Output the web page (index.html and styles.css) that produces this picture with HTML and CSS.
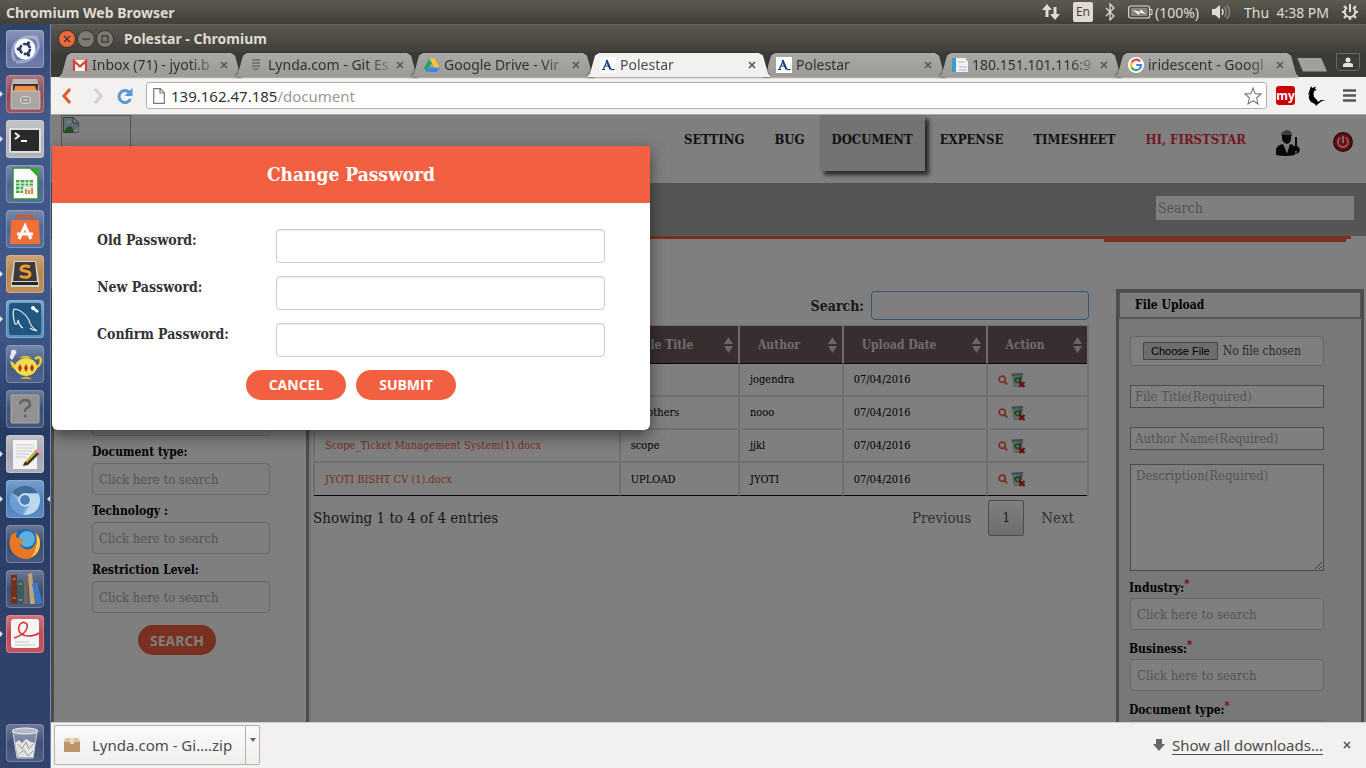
FILE: index.html
```html
<!DOCTYPE html>
<html lang="en">
<head>
<meta charset="utf-8">
<title>Polestar</title>
<link rel="stylesheet" href="styles.css">
</head>
<body>
<svg width="0" height="0" class="defs" aria-hidden="true">
  <defs>
    <linearGradient id="tile" x1="0" y1="0" x2="0" y2="1"><stop offset="0" stop-color="#fff" stop-opacity=".3"/><stop offset=".5" stop-color="#fff" stop-opacity=".08"/><stop offset="1" stop-color="#fff" stop-opacity=".14"/></linearGradient>
    <symbol id="frame" viewBox="0 0 38 38"><rect x=".5" y=".5" width="37" height="37" rx="3" fill="url(#tile)" stroke="#fff" stroke-opacity=".3"/></symbol>
    <symbol id="x" viewBox="0 0 10 10"><path d="M2 2l6 6M8 2L2 8" stroke="#555" stroke-width="1.6" fill="none"/></symbol>
    <symbol id="star-logo" viewBox="0 0 16 16"><rect width="16" height="16" fill="#fff"/><path d="M2 12.500h3M3.500 12L7 4M5 9h4M11 12q2 1.500 3.500 0" stroke="#1d3f87" stroke-width="1.200" fill="none"/><path d="M6.500 3l4 9.500" stroke="#1d3f87" stroke-width="2"/></symbol>
    <symbol id="lens" viewBox="0 0 10 10"><circle cx="4.200" cy="4.200" r="3.100" fill="none" stroke="#f26041" stroke-width="1.700"/><path d="M6.500 6.500l2.800 2.800" stroke="#f26041" stroke-width="1.900"/></symbol>
    <symbol id="bin" viewBox="0 0 16 16"><path d="M2.500 3L4 14.500h7L12.500 3z" fill="#c9d4d4" stroke="#9aa" stroke-width=".6"/><path d="M1.500 1.500L13 1v2l-11 1z" fill="#8797a2"/><path d="M9.500 4v10h1.500l1-10z" fill="#708090"/><path d="M5 8.500a2.400 2.400 0 1 1 3 2.400" fill="none" stroke="#259a1b" stroke-width="1.800"/><path d="M5 8l2 3" stroke="#259a1b" stroke-width="1.500"/><path d="M9.500 10l5 5M14.500 10l-5 5" stroke="#d8101c" stroke-width="2.200"/></symbol>
    <symbol id="sort" viewBox="0 0 9 16"><path d="M4.500 0L9 7H0zM4.500 16L9 9H0z" fill="#ccc"/></symbol>
  </defs>
</svg>

<header class="panel">
  <span class="panel-title">Chromium Web Browser</span>
  <svg width="18" height="18" viewBox="0 0 18 18"><path d="M5 14V4M13 4v9" stroke="#dfdbd2" stroke-width="3"/><path d="M0 7l5-6 5 6zM8 11l5 6 5-6z" fill="#dfdbd2"/></svg>
  <span class="lang">En</span>
  <svg class="bt" width="10" height="18" viewBox="0 0 10 18"><path d="M1 5l8 8-4 4V1l4 4-8 8" fill="none" stroke="#dfdbd2" stroke-width="1.300"/></svg>
  <svg class="bat" width="25" height="14" viewBox="0 0 25 14"><rect x=".7" y="1" width="21" height="12" rx="2" fill="none" stroke="#dfdbd2" stroke-width="1.200"/><rect x="3" y="3" width="16.500" height="8" fill="#89867e"/><path d="M22 4.500h2v5h-2" fill="none" stroke="#dfdbd2"/><path d="M5 5l7 2 .5-2.500L18 9l-6.500-1.500L11 10z" fill="#fff"/></svg>
  <span class="pct">(100%)</span>
  <svg class="vol" width="20" height="16" viewBox="0 0 20 16"><path d="M1 5h3l5-4v14l-5-4H1z" fill="#dfdbd2"/><path d="M11 5q2 3 0 6" stroke="#dfdbd2" stroke-width="1.500" fill="none"/><path d="M13.500 3q3.500 5 0 10M16 1q5 7 0 14" stroke="#89867e" stroke-width="1.500" fill="none"/></svg>
  <span class="clock">Thu&nbsp; 4:38 PM</span>
  <svg width="18" height="18" viewBox="0 0 18 18"><g fill="none" stroke="#dfdbd2"><path d="M6 4.500a5.300 5.300 0 1 0 6 0" stroke-width="2"/><path d="M9 1v8" stroke-width="2"/><path d="M3 3l2 2M15 3l-2 2M1 9h2.500M17 9h-2.500M3 15l2-2M15 15l-2-2M9 14.500V17" stroke-width="2.200"/></g></svg>
</header>

<div class="desk">
<nav class="launcher" aria-label="Launcher">
  <button aria-label="Dash"><svg viewBox="0 0 38 38"><rect width="38" height="38" rx="3" fill="#57679c"/><path d="M9 31C1 16 15 3 30 8M29 6c9 13-2 27-19 26" fill="none" stroke="#a9b4d6" stroke-width="3" opacity=".7"/><use href="#frame"/><circle cx="19" cy="19" r="10.500" fill="#fff"/><circle cx="19" cy="19" r="5" fill="none" stroke="#2b3c6b" stroke-width="2.600" stroke-dasharray="9 1.500"/><circle cx="12.300" cy="19" r="1.700" fill="#2b3c6b"/><circle cx="22.500" cy="13" r="1.700" fill="#2b3c6b"/><circle cx="22.500" cy="25" r="1.700" fill="#2b3c6b"/></svg></button>
  <button class="run" aria-label="Files"><svg viewBox="0 0 38 38"><rect width="38" height="38" rx="3" fill="#873a4c"/><use href="#frame"/><path d="M7 4h24l2 8v22H5V12z" fill="#bcb8b2"/><rect x="7" y="9" width="25" height="7" fill="#383532"/><path d="M8 16l1-5h20l2 5z" fill="#ef8c42"/><rect x="5" y="16" width="29" height="18" rx="1" fill="#aaa6a1" stroke="#d5d2ce" stroke-width=".7"/><rect x="15" y="22" width="9" height="6" rx="1.500" fill="#8b8782" stroke="#eee"/><path d="M17 25h5" stroke="#fff"/></svg></button>
  <button class="run" aria-label="Terminal"><svg viewBox="0 0 38 38"><rect width="38" height="38" rx="3" fill="#a8aab0"/><use href="#frame"/><rect x="3" y="8" width="32" height="25" rx="1" fill="#dedede"/><rect x="5" y="10" width="28" height="21" fill="#292b2b"/><path d="M9 13l4 3-4 3M15 21h6" fill="none" stroke="#fff" stroke-width="1.800"/></svg></button>
  <button aria-label="Calc"><svg viewBox="0 0 38 38"><use href="#frame"/><path d="M7 3h17l8 8v23H7z" fill="#fff" stroke="#2a972e" stroke-width="1.500"/><path d="M24 3h9v9z" fill="#37a832"/><rect x="10" y="15" width="17" height="13" fill="#4aa54a"/><path d="M10 18h17M10 21h17M10 25h17M14 15v13M19 15v13M23 15v13" stroke="#fff"/><rect x="17" y="22" width="11" height="8" fill="#dff0fa"/><path d="M20 29v-5M23 29v-4M26 29v-6" stroke="#e77a28" stroke-width="1.800"/></svg></button>
  <button aria-label="Software"><svg viewBox="0 0 38 38"><use href="#frame"/><path d="M12 12V6h14v6" fill="none" stroke="#c9573a" stroke-width="3"/><path d="M5 10h28l1 24H4z" fill="#ee7038"/><path d="M13 29l6-13 6 13M11 24h16" fill="none" stroke="#fff" stroke-width="3"/></svg></button>
  <button class="run" aria-label="Sublime"><svg viewBox="0 0 38 38"><rect width="38" height="38" rx="3" fill="#b57b3e"/><use href="#frame"/><path d="M5 26L8 6h22l3 20v6H5z" fill="#d4d4d0"/><path d="M7 26L9 7h20l2 19z" fill="#3a3a3a"/><path d="M6 27h26v3H6z" fill="#292929"/><path d="M24 12c-4-2-9-1-9 2s9 1 9 5-6 4-10 2" fill="none" stroke="#f89b36" stroke-width="3"/></svg></button>
  <button class="run" aria-label="Workbench"><svg viewBox="0 0 38 38"><rect width="38" height="38" rx="3" fill="#4181b5"/><use href="#frame"/><rect x="3" y="3" width="32" height="32" rx="3" fill="#22567e"/><path d="M9 24Q6 14 8 9q8 0 15 11 1 6 8 11-5-1-7-3M9 24q3 1 3-4 2 7 5 8" fill="none" stroke="#e5edf4" stroke-width="1.200"/><path d="M27 8l5 4" stroke="#fff" stroke-width="2.500"/><circle cx="27" cy="8" r="2" fill="#fff"/></svg></button>
  <button aria-label="Teapot"><svg viewBox="0 0 38 38"><use href="#frame"/><path d="M29 14c8-7 8 8-1 9" fill="none" stroke="#e8cb33" stroke-width="2.500"/><path d="M10 25q-5-2-6-9l3 1q2 3 4 3" fill="#e8cb33"/><ellipse cx="20" cy="22" rx="11" ry="9" fill="#f3df4e"/><path d="M13 13q7-5 13 0z" fill="#dfb92c"/><path d="M14 34q6-5 12 0z" fill="#cfae2c"/><path d="M14 19l2 4-2 4-2-4zM20 19l2 4-2 4-2-4zM26 19l2 4-2 4-2-4z" fill="#c42a22"/><path d="M6 15q-4-3-1-6-1-5 4-4 3 2 0 5-1 2-3 5" fill="#e7e9ef"/></svg></button>
  <button aria-label="Unknown"><svg viewBox="0 0 38 38"><use href="#frame"/><rect x="5" y="5" width="28" height="28" rx="1" fill="#929292" stroke="#aaa"/><path d="M14 14q1-4 5-4 5 0 5 4 0 3-3 4-2 1-2 4M18 26h2.500" fill="none" stroke="#626262" stroke-width="2.400"/></svg></button>
  <button class="run" aria-label="Editor"><svg viewBox="0 0 38 38"><rect width="38" height="38" rx="3" fill="#a2a2ab"/><use href="#frame"/><rect x="7" y="5" width="24" height="29" fill="#f2f2f2"/><path d="M10 10h18M10 13h18M10 16h16M10 19h13M10 22h10" stroke="#c9c9c9"/><path d="M18 28L30 15l4 3-12 12-5 1z" fill="#3c3b22"/><path d="M20 27l10-10" stroke="#d2bd3b" stroke-width="2"/><path d="M29 16l3-3 4 3-3 3z" fill="#e896b4"/></svg></button>
  <button class="run live" aria-label="Chromium"><svg viewBox="0 0 38 38"><rect width="38" height="38" rx="3" fill="#3e77b6"/><use href="#frame"/><circle cx="19" cy="20" r="15" fill="#8bb5e0"/><path d="M6 13a15 15 0 0 1 26 0H19a7 7 0 0 0-6 4z" fill="#436c97"/><path d="M6 13l7 10a7 7 0 0 0 8 3l-5 9A15 15 0 0 1 6 13z" fill="#6b9dce"/><path d="M33 14H23l3 7-8 14q15 0 16-15z" fill="#bdd7ef"/><circle cx="19" cy="20" r="6.500" fill="#dceafa"/><circle cx="19" cy="20" r="5" fill="#4b7eb5"/></svg></button>
  <button aria-label="Firefox"><svg viewBox="0 0 38 38"><use href="#frame"/><circle cx="19" cy="19" r="15" fill="#236aae"/><circle cx="21" cy="14" r="8" fill="#5cb0df"/><path d="M5 10q-4 12 3 19 8 7 17 4 10-5 9-18-1-5-5-8 4 8-1 14-5 6-11 2-6-4 1-7-5-4-7-3Q9 12 11 7 7 8 5 10z" fill="#e87922"/><path d="M30 8q6 7 3 16-2 6-8 8 8-8 5-24z" fill="#f7cf44"/></svg></button>
  <button aria-label="Library"><svg viewBox="0 0 38 38"><use href="#frame"/><path d="M5 5h6v29H5z" fill="#703020"/><path d="M6 9h4M6 28h4" stroke="#c28a4a"/><path d="M12 10h5v24h-5z" fill="#365e5b"/><path d="M13 14h3M13 30h3" stroke="#a3b7a4"/><path d="M18 8h4v26h-4z" fill="#766456"/><path d="M22 4l4-1 3 31h-5z" fill="#c3a477"/><path d="M26 14l5-2 5 21-6 1z" fill="#3e78c9"/></svg></button>
  <button class="run" aria-label="Reader"><svg viewBox="0 0 38 38"><rect width="38" height="38" rx="3" fill="#b83b46"/><use href="#frame"/><rect x="5" y="4" width="28" height="29" rx="3" fill="#f5f5f5"/><path d="M8 23Q23 18 21 9q-5-4-8 2-2 9 9 10 7 0 11-3" fill="none" stroke="#d8342e" stroke-width="1.600"/><path d="M9 27h14M9 30h20" stroke="#c9c9c9"/></svg></button>
  <button class="trash" aria-label="Trash"><svg viewBox="0 0 38 38"><use href="#frame"/><path d="M7 8l4 26h16l4-26" fill="#dde2e8" fill-opacity=".35" stroke="#cfd5dd"/><path d="M9 19l4-3 3 3 4-4 5 3 4 1-2 14H12z" fill="#e4e4e4"/><path d="M12 20l4 5 4-7 3 7 4-5M13 30l5-4 4 6 5-5" fill="none" stroke="#9b9b9b"/><ellipse cx="19" cy="7" rx="13" ry="3" fill="#b2b8c0" stroke="#eef"/></svg></button>
</nav>

<div class="window">
  <div class="titlebar">
    <button class="wb close" aria-label="Close"><svg viewBox="0 0 16 16"><path d="M5 5l6 6M11 5l-6 6" stroke="#3b3a36" stroke-width="1.300"/></svg></button>
    <button class="wb" aria-label="Minimize"><svg viewBox="0 0 16 16"><path d="M4 8h8" stroke="#3b3a36" stroke-width="1.300"/></svg></button>
    <button class="wb" aria-label="Maximize"><svg viewBox="0 0 16 16"><rect x="5" y="5" width="6" height="6" fill="none" stroke="#3b3a36" stroke-width="1.300"/></svg></button>
    <span class="window-title">Polestar - Chromium</span>
  </div>
  <div class="tabs">
    <div class="tab"><svg class="fav" viewBox="0 0 16 16"><rect x="1" y="3" width="14" height="11" fill="#f3f3f3"/><path d="M2 14V4l6 5.500L14 4v10" fill="none" stroke="#d93f33" stroke-width="2.200"/></svg><span class="tab-text fade">Inbox (71) - jyoti.b</span><svg class="tx"><use href="#x"/></svg></div>
    <div class="tab"><svg class="fav" viewBox="0 0 16 16"><path d="M4 3h8M4 6h8M4 9h8" stroke="#777" stroke-width="2"/><path d="M4 11h8l-4 3z" fill="#777"/></svg><span class="tab-text fade">Lynda.com - Git Es</span><svg class="tx"><use href="#x"/></svg></div>
    <div class="tab"><svg class="fav" viewBox="0 0 16 16"><path d="M5.500 1.500L0 11l2.700 4L8 6z" fill="#22a567"/><path d="M5.500 1.500h5L16 11h-5.200z" fill="#fbc934"/><path d="M5.500 10.500H16L13 15H2.700z" fill="#4385f0"/></svg><span class="tab-text fade">Google Drive - Vir</span><svg class="tx"><use href="#x"/></svg></div>
    <div class="tab on"><svg class="fav"><use href="#star-logo"/></svg><span class="tab-text">Polestar</span><svg class="tx"><use href="#x"/></svg></div>
    <div class="tab"><svg class="fav"><use href="#star-logo"/></svg><span class="tab-text">Polestar</span><svg class="tx"><use href="#x"/></svg></div>
    <div class="tab"><svg class="fav" viewBox="0 0 16 16"><path d="M0 1h4v14H0z" fill="#3c9ccb"/><path d="M4 1h9l3 4v10H4z" fill="#edf2f5"/><path d="M6 5h7M7 10h8M7 13h8" stroke="#aab5bd"/></svg><span class="tab-text fade">180.151.101.116:9</span><svg class="tx"><use href="#x"/></svg></div>
    <div class="tab"><svg class="fav" viewBox="0 0 16 16"><circle cx="8" cy="8" r="8" fill="#fff"/><g fill="none" stroke-width="2.200"><path d="M12 4.500A5 5 0 0 0 3.700 5.500" stroke="#ea4335"/><path d="M3.700 5.500a5 5 0 0 0 0 5" stroke="#fbbc05"/><path d="M3.700 10.500a5 5 0 0 0 7.500 1.500" stroke="#34a853"/><path d="M11.200 12Q13 10.500 13 8H8.200" stroke="#4285f4"/></g></svg><span class="tab-text fade">iridescent - Googl</span><svg class="tx"><use href="#x"/></svg></div>
    <button class="newtab" aria-label="New tab"></button>
    <button class="user" aria-label="Profile"><svg width="10" height="10" viewBox="0 0 10 10"><circle cx="5" cy="3" r="2.500" fill="#e4e4e4"/><path d="M0 10V8q0-2 3-2h4q3 0 3 2v2z" fill="#e4e4e4"/></svg></button>
  </div>
  <div class="toolbar">
    <button aria-label="Back"><svg width="12" height="18" viewBox="0 0 12 18"><path d="M9 2L3 9l6 7" fill="none" stroke="#e0602c" stroke-width="3.200"/></svg></button>
    <button aria-label="Forward"><svg width="12" height="18" viewBox="0 0 12 18"><path d="M3 2l6 7-6 7" fill="none" stroke="#d3d0cd" stroke-width="3.200"/></svg></button>
    <button aria-label="Reload"><svg width="18" height="18" viewBox="0 0 18 18"><path d="M13 5a6 6 0 1 0 1.500 7" fill="none" stroke="#5797d3" stroke-width="3"/><path d="M16.500 1v8h-8z" fill="#5797d3"/></svg></button>
    <div class="omnibox">
      <svg width="12" height="16" viewBox="0 0 12 16"><path d="M.7.700h6.600l4 4v10.600H.7zM7 1v4h4" fill="#fff" stroke="#777" stroke-width="1.200"/></svg>
      <a class="url" href="#">139.162.47.185<span>/document</span></a>
      <svg width="18" height="18" viewBox="0 0 18 18"><path d="M9 1l2.200 5.600 6 .4-4.600 3.800L14 17l-5-3.300L4 17l1.400-6.200L.8 7l6-.4z" fill="#fff" stroke="#777" stroke-width="1.100"/></svg>
    </div>
    <button class="my" aria-label="my">my</button>
    <button aria-label="Lizard"><svg width="20" height="20" viewBox="0 0 20 20"><path d="M3 3l1-3 1 2 3-1 1-1-1 3 2 1-3 1q-1 3 0 6l3 3 1 2 3-2h5l-4 1-4 3-2 2-1-2-4-2Q0 11 3 8L1 9l1-3z" fill="#000"/></svg></button>
    <button aria-label="Menu"><svg width="13" height="13" viewBox="0 0 13 13"><path d="M0 1.500h13M0 6.500h13M0 11.500h13" stroke="#555" stroke-width="2.600"/></svg></button>
  </div>

  <div class="page">
    <header class="site">
      <div class="logo"><svg width="16" height="16" viewBox="0 0 16 16"><path d="M.5.500h10l5 5v10H.5z" fill="#c1d7f5" stroke="#777"/><path d="M1 15q4-8 8-5l2 5z" fill="#3fa72a"/><path d="M3 6q0-2 2-2 3-1 3 2z" fill="#fff"/><path d="M10 15l5.500-6v6.500z" fill="#fff"/><path d="M10 1v5h5" fill="#fff" stroke="#777"/></svg></div>
      <nav class="menu">
        <a href="#">SETTING</a><a href="#">BUG</a><a href="#" class="current">DOCUMENT</a><a href="#">EXPENSE</a><a href="#">TIMESHEET</a><a href="#" class="hi">HI, FIRSTSTAR</a>
        <a href="#" class="pic" aria-label="Account"><svg width="24" height="26" viewBox="0 0 24 26"><path d="M5 6q0-5 6-6 5 0 5 6z" fill="#777"/><path d="M6 5h9q1 8-4 9-6-1-5-9z" fill="#111"/><path d="M0 25v-6q1-4 7-5l4 9 3-9q3 0 5 3v8q-10 2-19 0z" fill="#111"/><path d="M8 15l3 8 2-8-2 1z" fill="#eee"/><path d="M20 7v10" stroke="#111" stroke-width="2"/><circle cx="20" cy="20" r="3.700" fill="#111"/><circle cx="20" cy="22" r="1" fill="#ddd"/></svg></a>
        <a href="#" class="pic" aria-label="Log out"><svg width="20" height="20" viewBox="0 0 20 20"><circle cx="10" cy="10" r="9.200" fill="#e5101c" stroke="#411" stroke-width="1.500"/><circle cx="10" cy="10" r="5" fill="#e5101c" stroke="#ddd" stroke-width="1.800"/><path d="M10 3v8" stroke="#e5101c" stroke-width="5"/><path d="M10 4v7" stroke="#ddd" stroke-width="2"/></svg></a>
      </nav>
    </header>
    <div class="band"><input type="search" placeholder="Search" aria-label="Search"></div>
    <div class="rule"></div>
    <div class="rule short"></div>
    <div class="columns">
      <form class="filters">
        <input class="box" type="text" aria-label="Filter">
        <label for="f1">Document type:</label><input class="box" id="f1" placeholder="Click here to search">
        <label for="f2">Technology :</label><input class="box" id="f2" placeholder="Click here to search">
        <label for="f3">Restriction Level:</label><input class="box" id="f3" placeholder="Click here to search">
        <button type="button" class="pill">SEARCH</button>
      </form>
      <main>
        <div class="find"><label for="find">Search:</label><input id="find" type="text"></div>
        <table>
          <colgroup><col class="c1"><col class="c2"><col class="c3"><col class="c4"><col class="c5"></colgroup>
          <thead><tr><th></th><th><div>File Title<svg class="sort"><use href="#sort"/></svg></div></th><th><div>Author<svg class="sort"><use href="#sort"/></svg></div></th><th><div>Upload Date<svg class="sort"><use href="#sort"/></svg></div></th><th><div>Action<svg class="sort"><use href="#sort"/></svg></div></th></tr></thead>
          <tbody>
            <tr><td></td><td></td><td>jogendra</td><td>07/04/2016</td><td><div class="acts"><svg class="lens"><use href="#lens"/></svg><svg class="bin"><use href="#bin"/></svg></div></td></tr>
            <tr><td></td><td>All others</td><td>nooo</td><td>07/04/2016</td><td><div class="acts"><svg class="lens"><use href="#lens"/></svg><svg class="bin"><use href="#bin"/></svg></div></td></tr>
            <tr><td><a href="#">Scope_Ticket Management System(1).docx</a></td><td>scope</td><td>jjkl</td><td>07/04/2016</td><td><div class="acts"><svg class="lens"><use href="#lens"/></svg><svg class="bin"><use href="#bin"/></svg></div></td></tr>
            <tr><td><a href="#">JYOTI BISHT CV (1).docx</a></td><td>UPLOAD</td><td>JYOTI</td><td>07/04/2016</td><td><div class="acts"><svg class="lens"><use href="#lens"/></svg><svg class="bin"><use href="#bin"/></svg></div></td></tr>
          </tbody>
        </table>
        <div class="pager"><span>Showing 1 to 4 of 4 entries</span><button>Previous</button><button class="num">1</button><button>Next</button></div>
      </main>
      <form class="upload">
        <h2>File Upload</h2>
        <div class="fields">
          <input class="file" type="file" aria-label="File">
          <input class="plain" placeholder="File Title(Required)" aria-label="File title">
          <input class="plain" placeholder="Author Name(Required)" aria-label="Author name">
          <textarea placeholder="Description(Required)" aria-label="Description"></textarea>
          <label for="u1">Industry:<sup>*</sup></label><input class="box" id="u1" placeholder="Click here to search">
          <label for="u2">Business:<sup>*</sup></label><input class="box" id="u2" placeholder="Click here to search">
          <label for="u3">Document type:<sup>*</sup></label><input class="box" id="u3">
        </div>
      </form>
    </div>
    <div class="backdrop"></div>
    <form class="modal" role="dialog" aria-labelledby="mt">
      <h1 id="mt">Change Password</h1>
      <div class="rows">
        <label for="p1">Old Password:</label><input id="p1" type="password">
        <label for="p2">New Password:</label><input id="p2" type="password">
        <label for="p3">Confirm Password:</label><input id="p3" type="password">
      </div>
      <div class="buttons"><button type="button" class="pill">CANCEL</button><button type="button" class="pill">SUBMIT</button></div>
    </form>
  </div>

  <footer class="downloads">
    <div class="item"><button class="name"><svg width="16" height="14" viewBox="0 0 16 14"><path d="M2 0h12l2 4v10H0V4z" fill="#b9966b"/><path d="M2 0h12l2 4H0z" fill="#dcc39d"/><path d="M6 0h4v6H6z" fill="#e8d7ba"/></svg>Lynda.com - Gi….zip</button><button class="more" aria-label="Options"><svg width="6" height="4" viewBox="0 0 6 4"><path d="M0 0h6L3 4z" fill="#666"/></svg></button></div>
    <svg class="down" width="12" height="12" viewBox="0 0 12 12"><path d="M3 0h6v5h3l-6 7-6-7h3z" fill="#666"/></svg>
    <a href="#">Show all downloads...</a>
    <button class="dx" aria-label="Close downloads"><svg width="10" height="10"><use href="#x"/></svg></button>
  </footer>
</div>
</div>
</body>
</html>
```

FILE: styles.css
```css
* { box-sizing: border-box; }
body {
  margin: 0;
  height: 100vh;
  display: flex;
  flex-direction: column;
  overflow: hidden;
  font-family: "Noto Sans", "Open Sans", sans-serif;
}
button, input, textarea { font: inherit; margin: 0; }
button { border: 0; padding: 0; background: none; color: inherit; }
svg { display: block; flex: none; }
.defs { position: absolute; }

/* desktop panel */
.panel {
  flex: none;
  height: 24px;
  display: flex;
  align-items: center;
  padding: 0 7px 0 6px;
  background: linear-gradient(#5c5a50, #403f3a);
  color: #dfdbd2;
  font-size: 14px;
}
.panel-title { font-weight: bold; margin-right: auto; }
.lang { margin: 0 12px 0 13px; padding: 0 3px; line-height: 20px; font-size: 12px; border-radius: 2px; background: #dfdbd2; color: #454440; }
.bat { margin: 0 2px 0 13px; }
.vol { margin: 0 13px 0 12px; }
.clock { margin-right: 12px; }

.desk { flex: 1; display: flex; min-height: 0; }
.launcher {
  flex: none;
  width: 51px;
  display: flex;
  flex-direction: column;
  gap: 7px;
  padding: 6px 7px 6px 6px;
  background: linear-gradient(#2f436a, #43598a 12%, #3d5688 42%, #253b62 55%, #2e4068 75%, #31426c);
  border-right: 1px solid #7187a5;
}
.launcher button { position: relative; height: 38px; width: 38px; }
.trash { margin-top: auto; }
.run::before {
  content: "";
  position: absolute;
  left: -6px;
  top: 16px;
  border: 3px solid transparent;
  border-left-color: #dcdfe6;
  border-right: 0;
}
.live::after {
  content: "";
  position: absolute;
  right: -6px;
  top: 16px;
  border: 3px solid transparent;
  border-right-color: #dcdfe6;
  border-left: 0;
}

.window { flex: 1; min-width: 0; display: flex; flex-direction: column; }
.titlebar {
  flex: none;
  height: 28px;
  display: flex;
  align-items: center;
  gap: 3px;
  padding: 0 8px;
  background: linear-gradient(#5a584f, #413f3b);
  border-top: 1px solid #66645a;
  color: #dfdbd2;
  font-weight: bold;
  font-size: 14px;
}
.window-title { margin-left: 8px; }
.wb { width: 16px; height: 16px; border-radius: 8px; background: #7c7a72; box-shadow: 0 0 0 1px #35342f; }
.wb.close { background: #ee6a3c; }

.tabs { flex: none; height: 25px; display: flex; padding: 0 6px 0 8px; background: #3c3b37; }
.tab {
  position: relative;
  flex: 0 1 176px;
  min-width: 0;
  height: 25px;
  display: flex;
  align-items: center;
  gap: 4px;
  padding: 0 4px 0 13px;
  color: #33312d;
  font-size: 14px;
  filter: drop-shadow(0 0 1px #2f2e2b);
}
.tab::before {
  content: "";
  position: absolute;
  inset: 1px -8px 0 0;
  z-index: -1;
  background: linear-gradient(#aaa9a6, #9b9a97);
  clip-path: polygon(0 100%, 3px 85%, 8px 10%, 12px 0, calc(100% - 12px) 0, calc(100% - 8px) 10%, calc(100% - 3px) 85%, 100% 100%);
}
.tab.on { z-index: 1; color: #4c4c4c; }
.tab.on::before { background: #f2f1f0; }
.fav { width: 16px; height: 16px; }
.tab-text { flex: 1; white-space: nowrap; }
.fade {
  -webkit-mask: linear-gradient(90deg, #000 80%, rgba(0, 0, 0, .2));
  mask: linear-gradient(90deg, #000 80%, rgba(0, 0, 0, .2));
}
.tx { width: 10px; height: 10px; margin: 0 2px 0 0; }
.newtab { align-self: center; width: 30px; height: 14px; margin-left: 6px; background: #a09f9c; clip-path: polygon(0 0, 80% 0, 100% 100%, 20% 100%); }
.user { width: 24px; height: 18px; margin: 1px 0 0 auto; display: grid; place-items: center; border: 1px solid #6b6963; border-radius: 0 0 4px 4px; }

.toolbar {
  flex: none;
  height: 38px;
  display: flex;
  align-items: center;
  padding: 0 10px;
  gap: 12px;
  background: #f2f1f0;
  border-bottom: 1px solid #aaa8a5;
}
.toolbar > button:first-child { margin-right: 7px; }
.omnibox {
  flex: 1;
  display: flex;
  align-items: center;
  gap: 6px;
  height: 27px;
  padding: 0 4px 0 6px;
  background: #fff;
  border: 1px solid #b3b0ac;
  border-radius: 3px;
  margin-right: -3px;
}
.url { flex: 1; font-size: 15px; line-height: 24px; color: #333; text-decoration: none; }
.url span { color: #999; }
.my { width: 19px; height: 19px; border-radius: 3px; background: #cb0005; color: #fff; font-size: 12px; line-height: 19px; font-weight: bold; }
.toolbar > button:last-child { margin-left: 4px; }

/* web page */
.page {
  flex: 1;
  min-height: 0;
  display: flex;
  flex-direction: column;
  position: relative;
  overflow: hidden;
  background: #fff;
  font-family: "DejaVu Serif Condensed", "DejaVu Serif", serif;
  color: #333;
}
.site { flex: none; height: 68px; display: flex; justify-content: space-between; padding: 0 13px 0 10px; }
.logo { width: 70px; height: 68px; border: 1px solid #aaa; padding: 1px; }
.menu { display: flex; align-items: flex-start; font-size: 13px; font-weight: bold; line-height: 49px; }
.menu a { color: #222; text-decoration: none; padding: 0 15px; height: 56px; }
.menu .current { background: #e6e6e6; padding: 0 12px; box-shadow: 4px 4px 4px #555; }
.menu .hi { color: #e8304a; }
.menu .pic { padding-top: 15px; }
.menu .pic:last-child { padding: 17px 0 0 18px; }
.band { flex: none; display: flex; justify-content: flex-end; padding: 13px 12px; height: 53px; background: #aaa; }
.band input { width: 198px; height: 24px; border: 0; padding: 0 2px; background: #fff; font-size: 14px; }
::placeholder { color: #aaa; opacity: 1; }
.rule { flex: none; height: 3px; background: #f26041; margin-right: 15px; }
.rule.short { width: 242px; align-self: flex-end; margin-right: 20px; }
.columns { flex: 1; display: grid; grid-template-columns: 258px 1fr 250px; padding-top: 47px; min-height: 0; }
.filters {
  display: flex;
  flex-direction: column;
  align-items: stretch;
  padding: 112px 36px 0 38px;
  border: 3px solid #999;
  border-bottom: 0;
  box-shadow: 0 0 0 2px #e6e6e6;
}
.filters label, .fields label { color: #000; font-weight: bold; font-size: 12px; }
.filters label { margin-top: 6px; line-height: 21px; }
.box {
  flex: none;
  width: 100%;
  height: 32px;
  border: 1px solid #ccc;
  border-radius: 4px;
  padding: 0 6px;
  background: #fff;
  font-size: 13px;
}
.pill {
  height: 30px;
  border-radius: 15px;
  background: #f26041;
  color: #fff;
  font: bold 14px "Open Sans", sans-serif;
  width: 100px;
}
.filters .pill { align-self: center; flex: none; width: 78px; margin-top: 12px; margin-right: 8px; }

main { padding: 2px 27px 0 4px; min-width: 0; }
.find { display: flex; justify-content: flex-end; align-items: center; gap: 7px; font-size: 14px; font-weight: bold; margin-bottom: 5px; }
.find input { width: 218px; height: 29px; border: 1px solid #66afe9; border-radius: 4px; background: #fff; }
table { width: 100%; table-layout: fixed; border-spacing: 0; border-right: 2px solid #e0e0e0; font-size: 11px; color: #000; }
.c1 { width: 39.500%; }
.c2 { width: 15.400%; }
.c3 { width: 13.400%; }
.c4 { width: 18.600%; }
.c5 { width: 13.100%; }
th { height: 39px; padding: 0 5px 0 18px; background: #705a5e; border: 0 solid #e0e0e0; border-width: 1px 0 0 2px; border-bottom: 1px solid #111; color: #ddd; font-size: 12px; text-align: left; }
th div { display: flex; justify-content: space-between; align-items: center; }
.sort { width: 9px; height: 16px; }
td { height: 33px; padding: 0 0 0 10px; border-left: 2px solid #e0e0e0; border-bottom: 2px solid #e0e0e0; white-space: nowrap; }
tr:last-child td { border-bottom: 1px solid #111; }
td a { color: #f26041; text-decoration: none; }
.acts { display: flex; align-items: center; gap: 2px; }
.lens { width: 10px; height: 10px; }
.bin { width: 16px; height: 16px; }
.pager { display: flex; align-items: center; padding-top: 4px; font-size: 15px; }
.pager span { margin-right: auto; }
.pager button { padding: 0 17px; line-height: 34px; color: #666; }
.pager button:last-child { padding-right: 15px; }
.pager .num { width: 36px; padding: 0; border: 1px solid #999; border-radius: 2px; background: linear-gradient(#fff, #dcdcdc); color: #333; font-size: 13px; }

.upload { margin: 0 2px 0 0; border: 3px solid #999; border-bottom: 0; background: #f0f0f0; min-height: 0; }
.upload h2 { margin: 0; padding: 0 15px; border: 1px solid #aaa; border-bottom-width: 2px; background: #fafafa; color: #000; font-size: 12px; line-height: 24px; }
.fields { display: flex; flex-direction: column; padding: 17px 37px 0 11px; }
.fields > * { flex: none; }
.file { height: 30px; width: 100%; padding: 5px 12px; border: 1px solid #ccc; border-radius: 4px; background: #fff; font-size: 12px; line-height: 18px; margin-bottom: 19px; color: #555; }
.file::file-selector-button { font: 11px "Liberation Sans", Arial, sans-serif; height: 18px; padding: 0 7px; margin-right: 5px; border: 1px solid #888; border-radius: 1px; background: #ddd; color: #000; }
.plain { height: 23px; margin-bottom: 19px; padding: 0 4px; border: 1px solid #999; background: #fff; font-size: 13px; }
.plain + textarea { margin-top: -5px; }
textarea { height: 107px; padding: 3px 5px; border: 1px solid #999; background: #fff; font-size: 13px; resize: both; margin-bottom: 7px; }
.fields label { line-height: 20px; margin-left: -1px; }
.fields .box { margin-bottom: 9px; }
sup { color: #e00; line-height: 0; font-size: 11px; }

.backdrop { position: absolute; inset: 0; background: rgba(0, 0, 0, .5); }
.modal {
  position: absolute;
  top: 31px;
  left: 1px;
  width: 598px;
  padding-bottom: 30px;
  border-radius: 0 0 6px 6px;
  background: #fff;
  box-shadow: 0 5px 15px rgba(0, 0, 0, .5);
}
.modal h1 { margin: 0; background: #f26041; color: #fff; font-size: 19px; line-height: 57px; text-align: center; }
.rows { display: grid; grid-template-columns: 1fr 329px; gap: 13px; padding: 26px 45px 13px; }
.rows label { font-size: 14px; font-weight: bold; line-height: 22px; }
.rows input { height: 34px; border: 1px solid #ccc; border-radius: 4px; box-shadow: inset 0 1px 1px rgba(0, 0, 0, .075); }
.buttons { display: flex; justify-content: center; gap: 10px; }
.buttons .pill { padding-bottom: 2px; }

.downloads { flex: none; height: 46px; display: flex; align-items: center; padding: 0 14px 2px 3px; background: #f2f1f0; border-top: 1px solid #ccc; color: #4c4c4c; font-size: 15px; }
.item { display: flex; width: 206px; height: 40px; margin-right: auto; border: 1px solid #b5b2ae; border-radius: 2px; background: linear-gradient(#fafafa, #f0efee); }
.name { flex: 1; display: flex; align-items: center; gap: 12px; padding-left: 9px; white-space: nowrap; }
.more { width: 14px; padding: 12px 4px 0; border-left: 1px solid #b5b2ae; display: flex; }
.down { margin-right: 7px; }
.downloads a { color: #4c4c4c; text-underline-offset: 3px; }
.dx { margin-left: 19px; }
```
